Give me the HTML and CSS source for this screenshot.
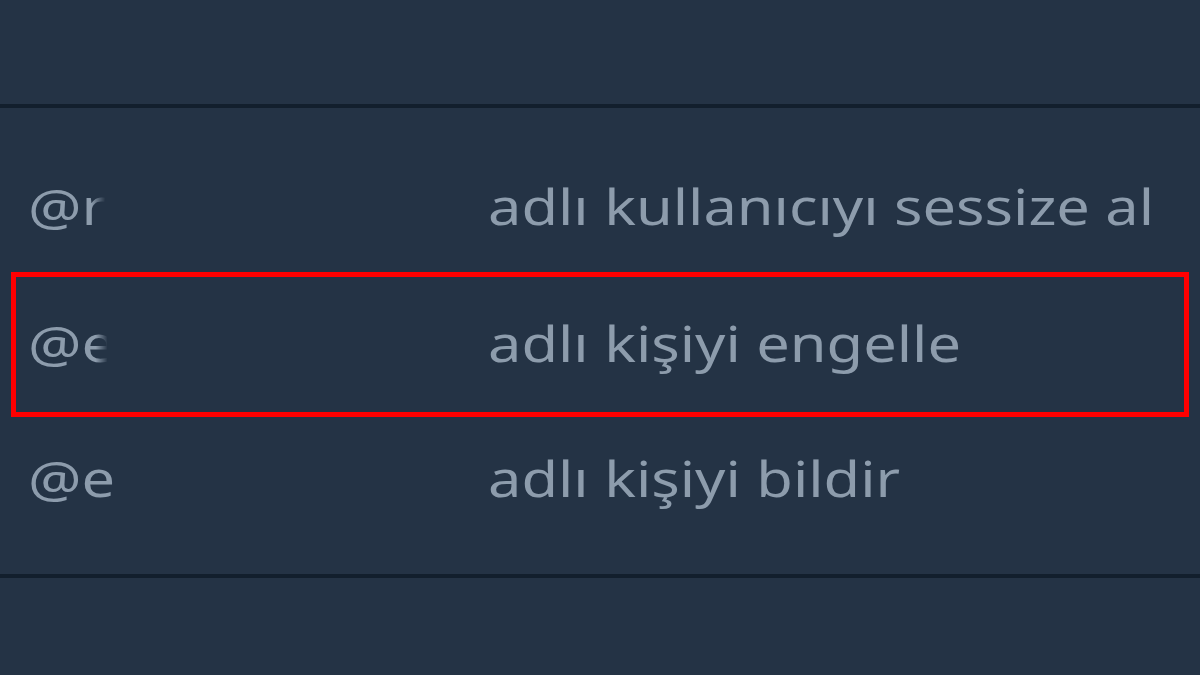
FILE: index.html
```html
<!DOCTYPE html>
<html lang="tr">
<head>
<meta charset="utf-8">
<link rel="stylesheet" href="styles.css">
</head>
<body>
<div class="page">
  <div class="header"></div>
  <div class="divider"></div>
  <div class="menu">
    <div class="row row-first">
      <span class="handle handle-a">@r</span>
      <span class="label">adlı kullanıcıyı sessize al</span>
    </div>
    <div class="row row-boxed">
      <span class="handle handle-b">@e</span>
      <span class="label">adlı kişiyi engelle</span>
    </div>
    <div class="row row-last">
      <span class="handle handle-c">@e</span>
      <span class="label">adlı kişiyi bildir</span>
    </div>
  </div>
  <div class="divider"></div>
  <div class="footer"></div>
</div>
</body>
</html>
```

FILE: styles.css
```css
html, body {
  margin: 0;
  padding: 0;
  background: #243345;
}
.page {
  width: 1200px;
  height: 675px;
  display: flex;
  flex-direction: column;
  overflow: hidden;
  font-family: "Noto Sans", "Open Sans", sans-serif;
  color: #8d9cac;
}
.header {
  height: 104px;
  flex: none;
}
.divider {
  height: 4px;
  flex: none;
  background: #121f2d;
}
.footer {
  flex: 1;
}
.menu {
  display: flex;
  flex-direction: column;
  flex: none;
}
.row {
  display: grid;
  grid-template-columns: 460px 1fr;
  padding-left: 28px;
  font-size: 50px;
  line-height: 50px;
  box-sizing: border-box;
}
.row-first {
  height: 164px;
  padding-top: 73px;
}
.row-boxed {
  height: 145px;
  margin: 0 11px;
  border: 5px solid #ff0000;
  padding-left: 12px;
  padding-top: 41px;
}
.row-last {
  height: 157px;
  padding-top: 36px;
}
.handle {
  display: block;
  overflow: hidden;
  white-space: nowrap;
  transform: scaleX(1.19);
  transform-origin: left center;
}
.handle-a {
  width: 65px;
  -webkit-mask-image: linear-gradient(to right, #000 82%, transparent);
  mask-image: linear-gradient(to right, #000 82%, transparent);
}
.handle-b {
  width: 67px;
  -webkit-mask-image: linear-gradient(to right, #000 85%, transparent);
  mask-image: linear-gradient(to right, #000 85%, transparent);
}
.handle-c { width: 74px; }
.label {
  display: block;
  white-space: nowrap;
  transform: scaleX(1.19);
  transform-origin: left center;
}
```
